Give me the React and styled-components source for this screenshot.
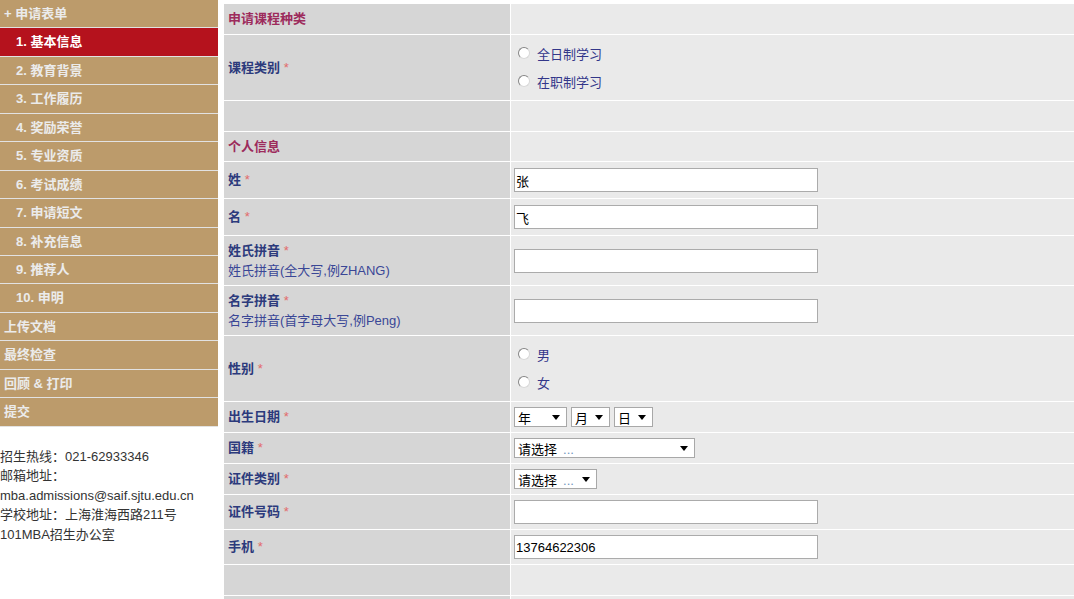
import React from 'react';
import styled, { createGlobalStyle } from 'styled-components';

const GlobalStyle = createGlobalStyle`
    html, body {
        margin: 0;
        padding: 0;
        background: #fff;
        font-family: "Liberation Sans", Arial, "Noto Sans CJK SC", sans-serif;
        font-size: 13px;
    }
`;

const Page = styled.div`
    display: flex;
    align-items: flex-start;
    width: 1074px;
    height: 599px;
    overflow: hidden;
`;

const Sidebar = styled.nav`
    flex: 0 0 218px;
    width: 218px;
`;

const Menu = styled.div`
    background: #bc9b6b;
`;

const MenuItem = styled.div`
    height: 27.45px;
    line-height: 27px;
    padding-left: ${p => (p.$sub ? '16px' : '4px')};
    border-bottom: 1px solid #e2e2e2;
    background: ${p => (p.$active ? '#b5121d' : 'transparent')};
    color: ${p => (p.$active ? '#fff' : '#ebebeb')};
    font-weight: bold;
    font-size: 13px;
    white-space: nowrap;
`;

const Contact = styled.div`
    padding-top: 20px;
    color: #333;
    font-size: 13px;
    line-height: 19.6px;
    white-space: nowrap;
`;

const Main = styled.main`
    flex: 1;
    padding: 4px 0 0 6px;
    overflow: hidden;
`;

const FormGrid = styled.div`
    display: grid;
    grid-template-columns: 286px 1fr;
    gap: 1px;
    width: 900px;
    background: #fff;
`;

const Label = styled.div`
    height: ${p => p.$h}px;
    box-sizing: border-box;
    display: flex;
    flex-direction: column;
    justify-content: center;
    padding: 0 4px;
    background: #d6d6d6;
    line-height: 20px;
    font-weight: bold;
    color: ${p => (p.$section ? '#9d2b5c' : '#2c3a7c')};
`;

const Hint = styled.span`
    font-weight: normal;
    color: #3a4796;
`;

const Star = styled.span`
    color: #e26a6a;
    font-weight: normal;
`;

const Field = styled.div`
    height: ${p => p.$h}px;
    box-sizing: border-box;
    display: flex;
    flex-direction: ${p => (p.$stack ? 'column' : 'row')};
    align-items: ${p => (p.$stack ? 'flex-start' : 'center')};
    gap: ${p => (p.$stack ? '0' : '4px')};
    padding: ${p => (p.$stack ? '6px 0 0 7px' : '0 0 0 3px')};
    background: #eaeaea;
`;

const RadioLine = styled.label`
    display: flex;
    align-items: flex-start;
    height: 28px;
    line-height: 28px;
    color: #33378a;
`;

const Radio = styled.input.attrs({ type: 'radio' })`
    appearance: none;
    width: 12px;
    height: 12px;
    margin: 6px 7px 0 0;
    border-radius: 50%;
    border: 1px solid;
    border-color: #858585 #d8d8d8 #d8d8d8 #858585;
    background: #fff;
    box-sizing: border-box;
`;

const TextInput = styled.input.attrs({ type: 'text' })`
    width: 304px;
    height: 24px;
    box-sizing: border-box;
    margin: 0;
    padding: 0 1px;
    border: 1px solid #ababab;
    background: #fff;
    font-family: "Liberation Sans", Arial, "Noto Sans CJK SC", sans-serif;
    font-size: 13px;
    color: #000;
    outline: none;
`;

const SelectBox = styled.div`
    width: ${p => p.$w}px;
    height: 20px;
    box-sizing: border-box;
    display: flex;
    align-items: center;
    padding: 0 6px 0 3px;
    border: 1px solid #a8a8a8;
    background: #fff;
    color: #000;
    font-size: 13px;
`;

const SelectText = styled.span`
    flex: 1;
    white-space: nowrap;
`;

const Dots = styled.span`
    color: #6f95bd;
    margin-left: 6px;
`;

const Arrow = styled.span`
    width: 0;
    height: 0;
    border-left: 4px solid transparent;
    border-right: 4px solid transparent;
    border-top: 5px solid #000;
`;

const menu = [
    { text: '+ 申请表单' },
    { text: '1. 基本信息', sub: true, active: true },
    { text: '2. 教育背景', sub: true },
    { text: '3. 工作履历', sub: true },
    { text: '4. 奖励荣誉', sub: true },
    { text: '5. 专业资质', sub: true },
    { text: '6. 考试成绩', sub: true },
    { text: '7. 申请短文', sub: true },
    { text: '8. 补充信息', sub: true },
    { text: '9. 推荐人', sub: true },
    { text: '10. 申明', sub: true },
    { text: '上传文档' },
    { text: '最终检查' },
    { text: '回顾 & 打印' },
    { text: '提交' }
];

const Select = ({ w, text, placeholder }) => (
    <SelectBox $w={w}>
        <SelectText>
            {text}
            {placeholder && <Dots>...</Dots>}
        </SelectText>
        <Arrow />
    </SelectBox>
);

const Row = ({ label, hint, required, section, h, stack, children }) => (
    <>
        <Label $h={h} $section={section}>
            {label && (
                <span>
                    {label}
                    {required && <Star> *</Star>}
                </span>
            )}
            {hint && <Hint>{hint}</Hint>}
        </Label>
        <Field $h={h} $stack={stack}>
            {children}
        </Field>
    </>
);

const App = () => {
    return (
        <Page>
            <GlobalStyle />
            <Sidebar>
                <Menu>
                    {menu.map(item => (
                        <MenuItem key={item.text} $sub={item.sub} $active={item.active}>
                            {item.text}
                        </MenuItem>
                    ))}
                </Menu>
                <Contact>
                    <div>招生热线：021-62933346</div>
                    <div>邮箱地址：</div>
                    <div>mba.admissions@saif.sjtu.edu.cn</div>
                    <div>学校地址：上海淮海西路211号</div>
                    <div>101MBA招生办公室</div>
                </Contact>
            </Sidebar>
            <Main>
                <FormGrid>
                    <Row label="申请课程种类" section h={30} />
                    <Row label="课程类别" required h={65} stack>
                        <RadioLine><Radio name="course" />全日制学习</RadioLine>
                        <RadioLine><Radio name="course" />在职制学习</RadioLine>
                    </Row>
                    <Row h={30} />
                    <Row label="个人信息" section h={29} />
                    <Row label="姓" required h={36}>
                        <TextInput defaultValue="张" />
                    </Row>
                    <Row label="名" required h={36}>
                        <TextInput defaultValue="飞" />
                    </Row>
                    <Row label="姓氏拼音" required hint="姓氏拼音(全大写,例ZHANG)" h={49}>
                        <TextInput />
                    </Row>
                    <Row label="名字拼音" required hint="名字拼音(首字母大写,例Peng)" h={49}>
                        <TextInput />
                    </Row>
                    <Row label="性别" required h={65} stack>
                        <RadioLine><Radio name="sex" />男</RadioLine>
                        <RadioLine><Radio name="sex" />女</RadioLine>
                    </Row>
                    <Row label="出生日期" required h={30}>
                        <Select w={53} text="年" />
                        <Select w={39} text="月" />
                        <Select w={39} text="日" />
                    </Row>
                    <Row label="国籍" required h={30}>
                        <Select w={181} text="请选择" placeholder />
                    </Row>
                    <Row label="证件类别" required h={30}>
                        <Select w={83} text="请选择" placeholder />
                    </Row>
                    <Row label="证件号码" required h={34}>
                        <TextInput />
                    </Row>
                    <Row label="手机" required h={34}>
                        <TextInput defaultValue="13764622306" />
                    </Row>
                    <Row h={30} />
                    <Row h={30} />
                </FormGrid>
            </Main>
        </Page>
    );
};

export default App;
